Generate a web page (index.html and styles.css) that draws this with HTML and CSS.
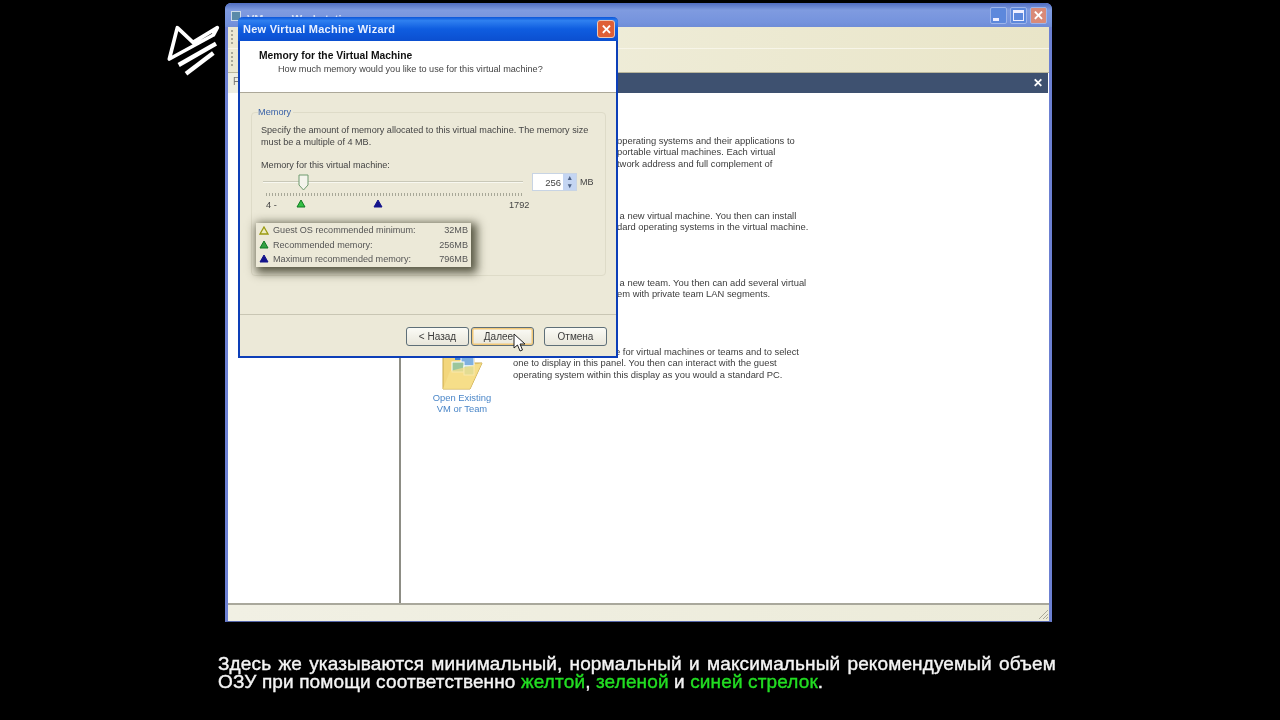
FILE: index.html
```html
<!DOCTYPE html>
<html lang="en">
<head>
    <meta charset="UTF-8">
    <title>New Virtual Machine Wizard</title>
    <link rel="stylesheet" href="styles.css">
</head>
<body>

<div class="screen">
    <svg class="logo" width="110" height="70" viewBox="0 0 330 210">
        <path d="M28 132 L52 38 L99 82 L172 38 L160 60 Z" fill="none" stroke="#fff" stroke-width="11" stroke-linejoin="round"/>
        <path d="M56 150 L168 86" fill="none" stroke="#fff" stroke-width="13"/>
        <path d="M78 176 L160 114" fill="none" stroke="#fff" stroke-width="13"/>
    </svg>

    <!-- main app window -->
    <div class="app">
        <div class="app-title">
            <div class="app-icon"></div>
            <span class="app-name">VMware Workstation</span>
            <div class="win-buttons">
                <div class="win-btn"><i class="min"></i></div>
                <div class="win-btn"><i class="max"></i></div>
                <div class="win-btn red">✕</div>
            </div>
        </div>
        <div class="bar"><div class="grip"></div></div>
        <div class="bar bar-last"><div class="grip"></div></div>
        <div class="app-body">
            <div class="sidebar"><span class="sidebar-label">F</span></div>
            <div class="home">
                <div class="home-head"><span>✕</span></div>
                <div class="home-text">
                    <p class="t1">operating systems and their applications to<br>portable virtual machines. Each virtual<br>twork address and full complement of</p>
                    <p class="t2">&nbsp;a new virtual machine. You then can install<br>dard operating systems in the virtual machine.</p>
                    <p class="t3">&nbsp;a new team. You then can add several virtual<br>em with private team LAN segments.</p>
                    <p class="t4">e for virtual machines or teams and to select<br>one to display in this panel. You then can interact with the guest<br>operating system within this display as you would a standard PC.</p>
                </div>
                <div class="open-item">
                    <svg width="44" height="42" viewBox="0 0 44 42">
                        <path d="M3 6 L3 40 L30 40 L42 14 L34 14 L34 6 Z" fill="#f3d67c" stroke="#c9a848"/>
                        <rect x="15" y="1" width="13" height="10" fill="#3f7fd0"/>
                        <rect x="21" y="7" width="13" height="10" fill="#7fb0e0" stroke="#fff"/>
                        <rect x="12" y="13" width="12" height="10" fill="#9cc69c" stroke="#fff"/>
                        <rect x="24" y="17" width="10" height="9" fill="#a8cfa0" stroke="#fff"/>
                        <path d="M3 40 L10 22 L42 14 L30 40 Z" fill="#f7e08e" opacity=".75"/>
                    </svg>
                    <div class="open-label">Open Existing<br>VM or Team</div>
                </div>
            </div>
        </div>
        <div class="status-bar">
            <svg class="resize" width="11" height="11" viewBox="0 0 11 11">
                <path d="M1 10 L10 1 M5 10 L10 5 M8 10 L10 8" stroke="#a9a898" stroke-width="1"/>
            </svg>
        </div>
    </div>

    <!-- wizard dialog on top -->
    <div class="wizard">
        <div class="wizard-title">
            <span>New Virtual Machine Wizard</span>
            <div class="close-btn">✕</div>
        </div>
        <div class="wizard-head">
            <div class="head-title">Memory for the Virtual Machine</div>
            <div class="head-sub">How much memory would you like to use for this virtual machine?</div>
        </div>
        <div class="wizard-body">
            <fieldset class="memory-group">
                <legend>Memory</legend>
                <p class="desc">Specify the amount of memory allocated to this virtual machine. The memory size<br>must be a multiple of 4 MB.</p>
                <div class="mem-label">Memory for this virtual machine:</div>
                <div class="slider-row">
                    <div class="slider">
                        <div class="track"></div>
                        <svg class="thumb" width="11" height="17" viewBox="0 0 11 17">
                            <path d="M1 1 H10 V11 L5.5 16 L1 11 Z" fill="#f4f4ec" stroke="#6f9a6f"/>
                        </svg>
                    </div>
                    <div class="spin">
                        <span class="spin-val">256</span>
                        <div class="spin-arrows"><b>▴</b><b>▾</b></div>
                    </div>
                    <span class="unit">MB</span>
                </div>
                <div class="ticks"></div>
                <div class="scale">
                    <span class="scale-min">4 -</span>
                    <svg class="mark mark-green" width="10" height="9" viewBox="0 0 10 9"><path d="M5 1 L9 8 H1 Z" fill="#35c045" stroke="#0f7a20"/></svg>
                    <svg class="mark mark-navy" width="10" height="9" viewBox="0 0 10 9"><path d="M5 1 L9 8 H1 Z" fill="#14148c" stroke="#14148c"/></svg>
                    <span class="scale-max">1792</span>
                </div>
                <div class="legend-box">
                    <div class="legend-row">
                        <svg class="tri" width="10" height="9" viewBox="0 0 10 9"><path d="M5 1 L9 8 H1 Z" fill="#ecebc0" stroke="#9a9a10" stroke-width="1.3"/></svg>
                        <span class="legend-name">Guest OS recommended minimum:</span><span>32MB</span>
                    </div>
                    <div class="legend-row">
                        <svg class="tri" width="10" height="9" viewBox="0 0 10 9"><path d="M5 1 L9 8 H1 Z" fill="#35a045" stroke="#0f7a20"/></svg>
                        <span class="legend-name">Recommended memory:</span><span>256MB</span>
                    </div>
                    <div class="legend-row">
                        <svg class="tri" width="10" height="9" viewBox="0 0 10 9"><path d="M5 1 L9 8 H1 Z" fill="#14148c" stroke="#14148c"/></svg>
                        <span class="legend-name">Maximum recommended memory:</span><span>796MB</span>
                    </div>
                </div>
            </fieldset>
        </div>
        <div class="wizard-foot">
            <button>&lt; Назад</button>
            <button class="active">Далее</button>
            <button class="cancel">Отмена</button>
            <svg class="cursor" width="14" height="20" viewBox="0 0 14 20">
                <path d="M1 1 L1 15 L4.5 12 L7 18 L9.5 17 L7 11 L12 11 Z" fill="#fff" stroke="#222"/>
            </svg>
        </div>
    </div>

    <div class="caption">
        <p class="line-1">Здесь же указываются минимальный, нормальный и максимальный рекомендуемый объем</p>
        <p>ОЗУ при помощи соответственно <em>желтой</em>, <em>зеленой</em> и <em>синей стрелок</em>.</p>
    </div>
</div>

</body>
</html>
```
FILE: styles.css
```css
* {
    box-sizing: border-box;
}

body {
    margin: 0;
    background-color: #000;
    font-family: 'Liberation Sans', Arial, sans-serif;
}

.screen {
    position: relative;
    width: 1280px;
    height: 720px;
    overflow: hidden;
    background-color: #000;
    filter: blur(0.35px);
}

.logo {
    position: absolute;
    left: 160px;
    top: 15px;
}

/* app window */
.app {
    position: absolute;
    left: 225px;
    top: 3px;
    width: 827px;
    height: 619px;
    display: flex;
    flex-direction: column;
    background-color: #e9e6d3;
    border: 3px solid #6c80d2;
    border-top: 0;
    border-bottom: 1px solid #5566aa;
    border-radius: 6px 6px 0 0;
}

.app-title {
    height: 24px;
    flex-shrink: 0;
    margin: 0 -3px;
    padding: 0 5px 0 6px;
    display: flex;
    align-items: center;
    background: linear-gradient(#4f6cc0, #7f9be0 30%, #7593dd 80%, #6f8cd6);
    border-radius: 6px 6px 0 0;
}

.app-icon {
    width: 10px;
    height: 10px;
    margin-top: 2px;
    background-color: #5b8aa8;
    border: 1px solid #cfdbe8;
}

.app-name {
    margin: 7px 0 0 6px;
    font-size: 11px;
    font-weight: bold;
    color: #d7e0f5;
}

.win-buttons {
    margin-left: auto;
    display: flex;
    gap: 3px;
}

.win-btn {
    width: 17px;
    height: 17px;
    display: flex;
    align-items: center;
    justify-content: center;
    background-color: #5d88dc;
    border: 1px solid #9db4ea;
    border-radius: 2px;
    color: #fff;
    font-size: 13px;
    font-weight: bold;
}

.win-btn.red {
    background-color: #d98a78;
}

.win-btn .min {
    width: 6px;
    height: 3px;
    margin: 8px 6px 0 0;
    background-color: #eef;
}

.win-btn .max {
    width: 11px;
    height: 11px;
    border: 1px solid #eef;
    border-top-width: 3px;
}

.bar {
    height: 22px;
    flex-shrink: 0;
    padding: 3px 0 0 3px;
    border-bottom: 1px solid #f7f5e8;
    background: linear-gradient(90deg, #ebe8d2, #f0eedc 30%, #e9e5c8);
}

.bar-last {
    height: 24px;
    border-bottom: 1px solid #b9b69c;
}

.grip {
    width: 2px;
    height: 15px;
    background-image: repeating-linear-gradient(#a8a898 0 2px, transparent 2px 4px);
}

.app-body {
    flex: 1;
    display: flex;
    background-color: #fff;
    border-bottom: 2px solid #a9a89c;
}

.sidebar {
    width: 173px;
    border-right: 2px solid #8d8d85;
    background-color: #fff;
}

.sidebar-label {
    display: block;
    height: 20px;
    padding: 3px 0 0 5px;
    background-color: #eeeee2;
    font-size: 10px;
    color: #777;
}

.home {
    position: relative;
    flex: 1;
}

.home-head {
    height: 20px;
    padding-right: 5px;
    margin-right: 1px;
    display: flex;
    align-items: center;
    justify-content: flex-end;
    background-color: #3e5170;
    color: #fff;
    font-size: 12px;
    font-weight: bold;
}

.home-text p {
    position: absolute;
    margin: 0;
    font-size: 9.4px;
    line-height: 11.3px;
    color: #3c3c3c;
    white-space: nowrap;
}

/* these sit where the wizard cuts them off */
.t1 { left: 216px; top: 62px; }
.t2 { left: 216px; top: 137px; }
.t3 { left: 216px; top: 204px; }
.t4 { left: 112px; top: 273px; text-indent: 102px; }

.open-item {
    position: absolute;
    left: 28px;
    top: 276px;
    width: 66px;
    text-align: center;
}

.open-item svg {
    display: block;
    margin: 0 auto;
}

.open-label {
    margin-top: 1px;
    font-size: 9.4px;
    line-height: 11.3px;
    color: #4a86c8;
}

.status-bar {
    position: relative;
    height: 16px;
    flex-shrink: 0;
    background: linear-gradient(90deg, #f1f0e4, #ecebd9);
}

.resize {
    position: absolute;
    right: 0;
    bottom: 1px;
}

/* wizard dialog */
.wizard {
    position: absolute;
    left: 238px;
    top: 17px;
    width: 380px;
    height: 341px;
    display: flex;
    flex-direction: column;
    background-color: #ece9d8;
    border: 2px solid #0d3fb8;
    border-top: 0;
    border-radius: 5px 5px 0 0;
}

.wizard-title {
    height: 24px;
    flex-shrink: 0;
    margin: 0 -2px;
    padding: 0 3px 0 5px;
    display: flex;
    align-items: center;
    justify-content: space-between;
    background: linear-gradient(#0b55d8, #2f80f0 15%, #0f5de0 50%, #0b4fd0);
    border-radius: 5px 5px 0 0;
    color: #e8f0ff;
    font-size: 11px;
    font-weight: bold;
    letter-spacing: 0.25px;
}

.close-btn {
    width: 18px;
    height: 18px;
    display: flex;
    align-items: center;
    justify-content: center;
    background-color: #df5f35;
    border: 1px solid #e8c8b8;
    border-radius: 3px;
    color: #fff;
    font-size: 13px;
    font-weight: bold;
    letter-spacing: 0;
}

.wizard-head {
    height: 52px;
    padding: 9px 0 0 19px;
    flex-shrink: 0;
    background-color: #fff;
    border-bottom: 1px solid #aca899;
}

.head-title {
    font-size: 10.3px;
    font-weight: bold;
    line-height: 12px;
    color: #111;
}

.head-sub {
    margin: 1px 0 0 19px;
    font-size: 9.15px;
    line-height: 12px;
    color: #444;
}

.wizard-body {
    flex: 1;
    padding: 14px 10px 0 11px;
}

.memory-group {
    position: relative;
    height: 169px;
    margin: 0;
    padding: 8px 10px 0 9px;
    border: 1px solid #dedbc8;
    border-radius: 4px;
}

.memory-group legend {
    margin-left: -3px;
    padding: 0 2px 0 0;
    font-size: 9.2px;
    color: #3a62a8;
}

.desc {
    margin: 0;
    font-size: 9.1px;
    line-height: 11.5px;
    color: #444;
    white-space: nowrap;
}

.mem-label {
    margin-top: 11px;
    font-size: 9.1px;
    line-height: 12px;
    color: #444;
}

.slider-row {
    height: 20px;
    margin-top: 1px;
    display: flex;
    align-items: center;
}

.slider {
    position: relative;
    width: 260px;
    margin-left: 2px;
}

.track {
    height: 2px;
    background-color: #c9c8b8;
    border-bottom: 1px solid #f8f8f0;
}

.thumb {
    position: absolute;
    left: 35px;
    top: -7px;
}

.spin {
    width: 45px;
    height: 18px;
    margin-left: 9px;
    display: flex;
    align-items: center;
    justify-content: flex-end;
    background-color: #fff;
    border: 1px solid #c8d4e4;
    font-size: 9.5px;
    color: #444;
}

.spin-arrows {
    width: 13px;
    margin-left: 2px;
    display: flex;
    flex-direction: column;
    background-color: #c4d5f2;
    color: #4d6185;
    font-size: 7px;
    line-height: 8px;
    text-align: center;
}

.spin-arrows b {
    display: block;
}

.unit {
    margin-left: 3px;
    font-size: 9px;
    color: #444;
}

.ticks {
    width: 256px;
    height: 3px;
    margin: 1px 0 0 5px;
    background-image: repeating-linear-gradient(90deg, #a8a898 0 1px, transparent 1px 3px);
}

.scale {
    position: relative;
    height: 14px;
    margin-top: 2px;
    font-size: 9.2px;
    line-height: 14px;
    color: #444;
}

.scale span {
    position: absolute;
}

.scale-min {
    left: 5px;
}

.scale-max {
    left: 248px;
    top: 0;
}

.mark {
    position: absolute;
    top: 1px;
}

.mark-green {
    left: 35px;
}

.mark-navy {
    left: 112px;
}

.legend-box {
    position: absolute;
    left: 4px;
    top: 106px;
    width: 215px;
    height: 44px;
    padding: 0 3px;
    background-color: #ece9d8;
    box-shadow: 3px 3px 9px 3px rgba(50, 50, 30, 0.8);
}

.legend-row {
    height: 14.4px;
    display: flex;
    align-items: center;
    font-size: 9.1px;
    color: #555;
}

.legend-name {
    flex: 1;
}

.tri {
    width: 10px;
    margin-right: 4px;
}

.wizard-foot {
    position: relative;
    height: 42px;
    padding: 12px 9px 0 0;
    display: flex;
    justify-content: flex-end;
    flex-shrink: 0;
    border-top: 1px solid #c9c6b4;
}

.wizard-foot button {
    width: 63px;
    height: 19px;
    margin-left: 2px;
    padding: 0;
    background: linear-gradient(#fbfbf6, #e8e6da);
    border: 1px solid #5e6f78;
    border-radius: 3px;
    font-family: inherit;
    font-size: 10px;
    color: #3c3c3c;
}

.wizard-foot .active {
    padding-right: 8px;
    box-shadow: inset 0 0 0 1.5px #f2c878;
}

.wizard-foot .cancel {
    margin-left: 10px;
}

.cursor {
    position: absolute;
    left: 273px;
    top: 18px;
}

/* subtitle */
.caption {
    position: absolute;
    left: 218px;
    top: 655px;
    width: 838px;
    font-size: 19px;
    line-height: 18px;
    letter-spacing: 0.13px;
    color: #f4f4f4;
    -webkit-text-stroke: 0.4px currentColor;
}

.caption p {
    margin: 0;
    white-space: nowrap;
}

.caption .line-1 {
    text-align: justify;
    text-align-last: justify;
    white-space: normal;
}

.caption em {
    font-style: normal;
    color: #22dd22;
}
```
